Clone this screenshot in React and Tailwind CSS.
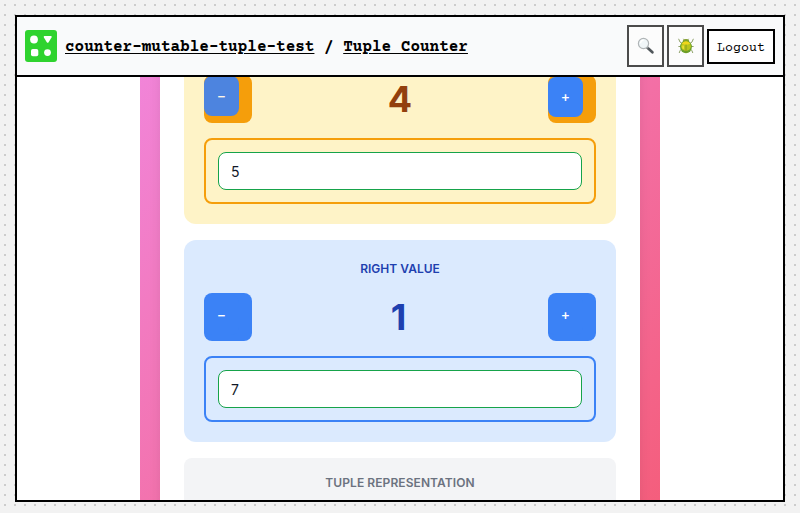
import React from "react";

function MagnifierIcon() {
  return (
    <svg width="18" height="18" viewBox="0 0 18 18" className="block">
      <path d="M10.5 10.8 L15.4 15.3" stroke="#50565a" strokeWidth="2.7" strokeLinecap="round" />
      <path d="M9.8 9.8 L11.3 11.2" stroke="#8d9396" strokeWidth="1.6" />
      <circle cx="6.5" cy="6.5" r="5.1" fill="#f0f6f8" stroke="#b0b5b7" strokeWidth="1.2" />
      <path d="M3.5 6.2 A3.4 3.4 0 0 1 6.6 3.2" fill="none" stroke="#fff" strokeWidth="1.2" />
    </svg>
  );
}

function BeetleIcon() {
  return (
    <svg width="18" height="18" viewBox="0 0 18 18" className="block">
      <g fill="none" stroke="#90a26a" strokeWidth="1">
        <path d="M7.5 3.2 L6.4 1.8 M10.5 3.2 L11.6 1.8" />
        <path d="M5 6.5 L3 5 L1.6 1.8 M13 6.5 L15 5 L16.4 1.8" />
        <path d="M4.2 9.5 H1.4 M13.8 9.5 H16.6" />
        <path d="M5 12 L3.2 13.3 L2.2 16 M13 12 L14.8 13.3 L15.8 16" />
      </g>
      <ellipse cx="9" cy="4.4" rx="3.3" ry="2.5" fill="#83a02c" />
      <ellipse cx="9" cy="10" rx="5.9" ry="6.2" fill="#6ba02a" />
      <ellipse cx="9" cy="9.2" rx="4.9" ry="4.7" fill="#b9c51c" />
      <path d="M4.7 6.5 Q9 2.2 13.3 6.5 Q9 9 4.7 6.5" fill="#f0d61a" />
      <path d="M9 7.6 V15.8" stroke="#7c9320" strokeWidth=".8" />
      <path d="M6.3 8.5 Q5.6 10 6.5 11.8" stroke="#f2e235" strokeWidth="1.6" fill="none" />
    </svg>
  );
}

function Logo() {
  return (
    <svg width="32" height="32" viewBox="0 0 32 32" className="block shrink-0">
      <rect width="32" height="32" rx="3" fill="#2fd32f" />
      <g fill="#fff">
        <circle cx="9" cy="9.5" r="3.9" />
        <path d="M19.4 6 H26 Q27.2 6.2 26.5 7.5 L23.6 12.3 Q22.7 13.3 21.8 12.3 L18.9 7.5 Q18.3 6.3 19.4 6Z" />
        <rect x="6" y="19" width="7.3" height="7.3" rx="1.8" />
        <circle cx="22.5" cy="22.6" r="3.4" />
      </g>
    </svg>
  );
}

function StepButton({ sign, outer, inner }) {
  return (
    <div className={`h-12 w-12 rounded-lg pt-0.5 ${outer}`}>
      <button className={`flex h-10 w-[35px] items-center justify-center rounded-lg bg-[#3b82f6] text-[14px] leading-5 font-medium text-white ${inner}`}>
        {sign}
      </button>
    </div>
  );
}

function ValueSection({ title, value, input, section, heading, number, outer, minus, border }) {
  return (
    <section className={`h-[202px] shrink-0 rounded-xl p-5 ${section}`}>
      <h2 className={`h-[33px] pt-[1px] text-center text-[12px] leading-4 font-semibold tracking-[0.02px] ${heading}`}>{title}</h2>
      <div className="flex h-12 items-center justify-between">
        <StepButton sign="−" outer={outer} inner={minus} />
        <span className={`text-[36px] leading-none font-bold ${number}`}>{value}</span>
        <StepButton sign="+" outer={outer} inner="" />
      </div>
      <div className={`mt-[15px] h-[66px] rounded-lg border-2 p-3 ${border}`}>
        <input
          defaultValue={input}
          className="block h-[38px] w-full rounded-lg border border-[#16a34a] bg-white px-3 text-[14px] text-[#111827] outline-none"
        />
      </div>
    </section>
  );
}

export default function App() {
  return (
    <div className="h-[513px] w-[800px] overflow-hidden bg-[#f2f2f2] bg-[conic-gradient(from_90deg_at_8px_2px,transparent_75%,#cccccc_0)] bg-[length:10px_10px] bg-[position:-4px_4px] p-[15px] font-['Inter',sans-serif]">
      <div className="flex h-[487px] flex-col border-2 border-black bg-white">
        <header className="flex h-[60px] shrink-0 items-center border-b-2 border-black bg-[#f9fafb] px-2 font-['Courier_Prime','Liberation_Mono',monospace]">
          <Logo />
          <nav className="ml-2 flex-1 pt-0.5 text-[16px] leading-6 font-bold whitespace-pre text-black">
            <a className="underline underline-offset-2">counter-mutable-tuple-test</a>
            {" / "}
            <a className="underline underline-offset-2">Tuple Counter</a>
          </nav>
          <div className="flex items-center gap-[3px]">
            <button className="flex h-[42px] w-[37px] items-center justify-center border-2 border-[#4b4b4b] bg-[#fcfcfc]">
              <MagnifierIcon />
            </button>
            <button className="flex h-[42px] w-[37px] items-center justify-center border-2 border-[#4b4b4b] bg-[#fcfcfc]">
              <BeetleIcon />
            </button>
            <button className="h-[35px] w-[68px] border-2 border-black bg-white pt-[5px] text-[13.333px] text-black">Logout</button>
          </div>
        </header>
        <main className="flex min-h-0 flex-1 justify-center overflow-hidden">
          <div className="-mt-[357px] h-[950px] w-[520px] shrink-0 bg-[linear-gradient(135deg,#f093fb_0%,#f5576c_100%)] px-5">
            <div className="flex h-full flex-col gap-4 bg-white px-6 pt-[302px] shadow-[0_4px_12px_rgba(0,0,0,0.08)]">
              <ValueSection
                title="LEFT VALUE"
                value="4"
                input="5"
                section="bg-[#fef3c7]"
                heading="text-[#92400e]"
                number="text-[#92400e]"
                outer="bg-[#f59e0b]"
                minus="-translate-y-px opacity-90"
                border="border-[#f59e0b]"
              />
              <ValueSection
                title="RIGHT VALUE"
                value="1"
                input="7"
                section="bg-[#dbeafe]"
                heading="text-[#1e40af]"
                number="pr-[3px] text-[#1e40af]"
                outer="bg-[#3b82f6]"
                minus=""
                border="border-[#3b82f6]"
              />
              <section className="h-[120px] shrink-0 rounded-lg bg-[#f3f4f6] pt-[17px] text-center">
                <h2 className="text-[12px] leading-4 font-semibold tracking-[0.08px] text-[#6b7280]">TUPLE REPRESENTATION</h2>
              </section>
            </div>
          </div>
        </main>
      </div>
    </div>
  );
}
